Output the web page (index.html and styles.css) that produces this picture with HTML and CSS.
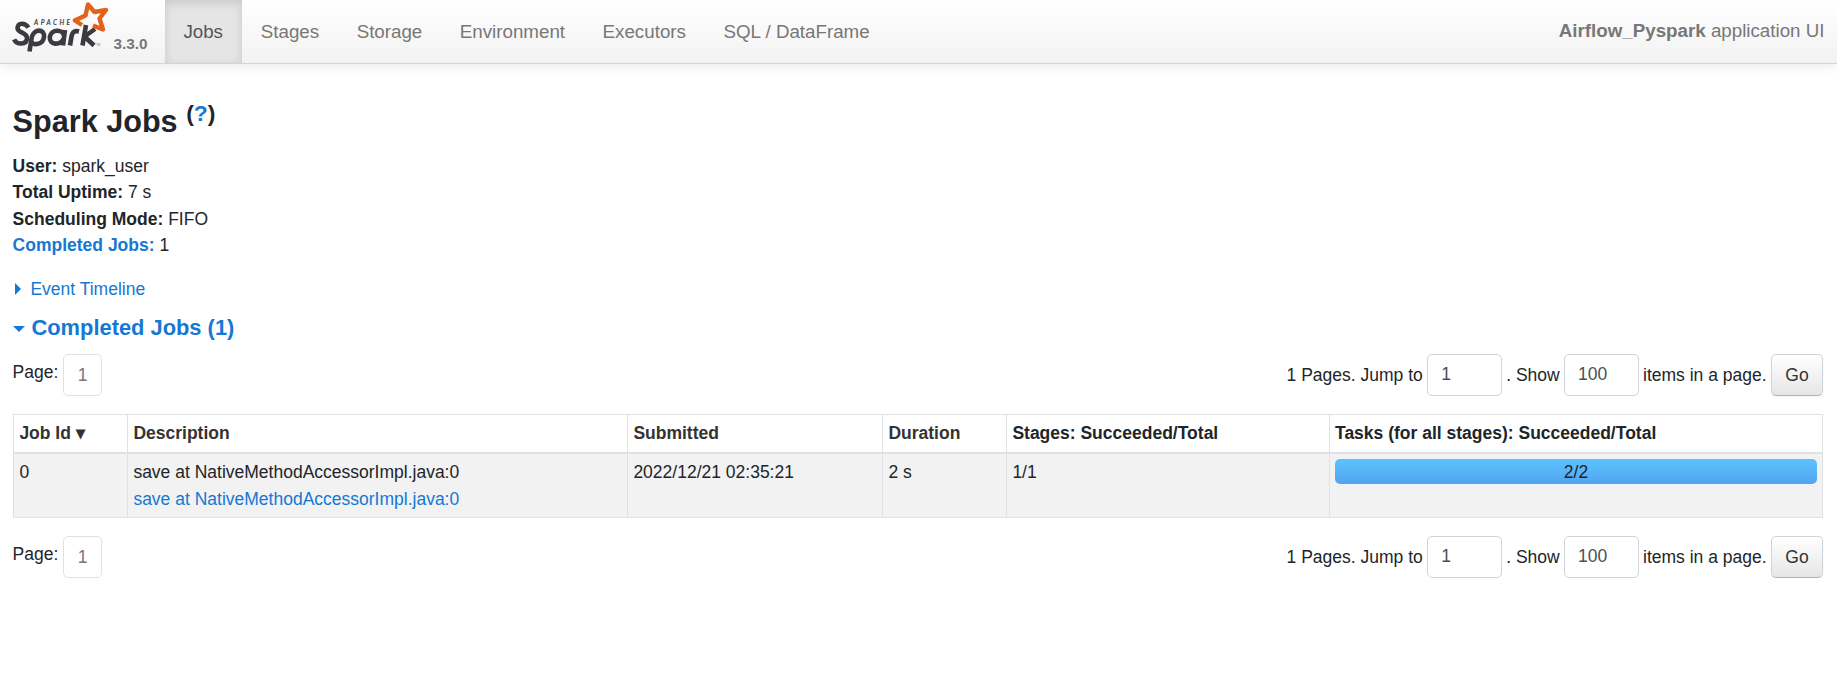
FILE: index.html
```html
<!DOCTYPE html>
<html lang="en">
<head>
<meta charset="utf-8">
<title>Airflow_Pyspark - Spark Jobs</title>
<link rel="stylesheet" href="styles.css">
</head>
<body>
<nav class="navbar">
  <a class="brand">
    <svg class="logo" viewBox="0 0 105 56" width="105" height="56" role="img" aria-label="Apache Spark">
      <g fill="none" stroke="#3c3a3e" stroke-width="4.6" stroke-linejoin="round">
        <path d="M20.500 27.500C17 22.500 9.500 22.500 9.500 28C9.500 33.500 19.500 32 19 38.500C18.500 45 9 45 6 39.500"/>
        <path d="M21.500 51.500L23.800 37C26 28.500 37 28.500 36 37C35 45 26 45.500 23.500 42"/>
        <path d="M55 45.500L57 30M56 36C55.500 29 43 28.500 41.800 37C41 45.500 52 45.500 55.500 39"/>
        <path d="M62 45.500L63.500 36.500C64.500 31.500 67 30.500 71 31.500"/>
        <path d="M74.500 45.500L78 25M87 29L76.500 36.500L86 45.500"/>
      </g>
      <path d="M74 25L66.800 20.500L77.500 15.500L80 4.500L86.500 12L98 10L91.500 18.500L95 29.500L85 25.500" fill="none" stroke="#e2621b" stroke-width="4.400" stroke-linejoin="round"/>
      <text class="logo-small" x="26" y="25" textLength="36">APACHE</text>
      <text class="logo-tm" x="88" y="45.500">TM</text>
    </svg>
    <span class="version">3.3.0</span>
  </a>
  <ul class="nav">
    <li class="active">Jobs</li><li>Stages</li><li>Storage</li><li>Environment</li><li>Executors</li><li>SQL / DataFrame</li>
  </ul>
  <span class="app-name"><strong>Airflow_Pyspark</strong> application UI</span>
</nav>
<main class="container">
  <h3>Spark Jobs <sup>(<a>?</a>)</sup></h3>
  <ul class="summary">
    <li><strong>User:</strong> spark_user</li>
    <li><strong>Total Uptime:</strong> 7 s</li>
    <li><strong>Scheduling Mode:</strong> FIFO</li>
    <li><a><strong>Completed Jobs:</strong></a> 1</li>
  </ul>
  <div class="timeline"><span class="arrow-right"></span><a>Event Timeline</a></div>
  <h4><span class="arrow-down"></span><a>Completed Jobs (1)</a></h4>
  <div class="pager">
    <div class="pages"><span class="page-label">Page:</span><span class="page-link">1</span></div>
    <form class="jump"><label>1 Pages. Jump to</label><input type="text" value="1"><label class="show">. Show</label><input type="text" value="100"><label>items in a page.</label><button type="button">Go</button></form>
  </div>
  <table>
    <colgroup><col class="c-id"><col class="c-desc"><col class="c-sub"><col class="c-dur"><col class="c-stages"><col class="c-tasks"></colgroup>
    <thead><tr><th class="sort">Job Id ▾</th><th class="sort">Description</th><th class="sort">Submitted</th><th class="sort">Duration</th><th>Stages: Succeeded/Total</th><th class="tasks-head">Tasks (for all stages): Succeeded/Total</th></tr></thead>
    <tbody><tr>
      <td>0</td>
      <td>save at NativeMethodAccessorImpl.java:0<br><a>save at NativeMethodAccessorImpl.java:0</a></td>
      <td>2022/12/21 02:35:21</td><td>2 s</td><td>1/1</td>
      <td class="tasks"><div class="progress">2/2</div></td>
    </tr></tbody>
  </table>
  <div class="pager">
    <div class="pages"><span class="page-label">Page:</span><span class="page-link">1</span></div>
    <form class="jump"><label>1 Pages. Jump to</label><input type="text" value="1"><label class="show">. Show</label><input type="text" value="100"><label>items in a page.</label><button type="button">Go</button></form>
  </div>
</main>
</body>
</html>
```
FILE: styles.css
```css
* { box-sizing: border-box; }
body {
  margin: 0;
  font: 17.5px/26.25px "Liberation Sans", Arial, sans-serif;
  color: #212529;
  background: #fff;
}
ul { list-style: none; margin: 0; padding: 0; }
a { color: #1578d2; text-decoration: none; }
.navbar {
  display: flex;
  height: 64px;
  padding: 0 12.5px 0 8px;
  background: linear-gradient(#fff, #f2f2f2);
  border-bottom: 1px solid #d4d4d4;
  box-shadow: 0 1px 12px rgba(0, 0, 0, .1);
  color: #777;
  font-size: 18.75px;
}
.brand { display: flex; width: 157px; color: #777; }
.logo { flex: none; }
.logo-small { font: italic bold 6.5px Lato, sans-serif; fill: #3c3a3e; }
.logo-tm { font: 3px "Liberation Sans", sans-serif; fill: #777; }
.version { margin-left: .6px; font-size: 15.3px; font-weight: bold; line-height: 20px; padding-top: 34px; }
.nav { display: flex; }
.nav li { padding: 18px 18.75px 0; line-height: 28px; height: 63px; }
.nav .active {
  padding-left: 18.4px;
  padding-right: 19px;
  color: #555;
  background: #e5e5e5;
  box-shadow: inset 0 3px 10px rgba(0, 0, 0, .125);
}
.app-name { margin-left: auto; padding-top: 17px; line-height: 28px; }
.container { padding: 39px 14px 0 12.6px; }
h3 { margin: 0 0 13.25px; font-size: 30.625px; line-height: 36.75px; }
sup { position: relative; top: -.5em; font-size: 75%; line-height: 0; vertical-align: baseline; }
.timeline { display: flex; align-items: center; margin-top: 18px; }
.arrow-right { margin: 0 9.4px 0 2.4px; border: 6.5px solid transparent; border-left-color: #1578d2; border-right: 0; }
.arrow-down { margin: 3px 6.5px 0 .4px; border: 6px solid transparent; border-top-color: #1578d2; border-bottom: 0; }
h4 { display: flex; align-items: center; margin: 12.25px 0 13.25px; font-size: 21.875px; line-height: 26.25px; }
.pager { display: flex; justify-content: space-between; height: 42px; }
.pages, .jump { display: flex; }
.page-label { margin-right: 4.8px; line-height: 36px; }
.page-link {
  width: 39px;
  border: 1px solid #dee2e6;
  border-radius: 5px;
  color: #777;
  line-height: 40px;
  text-align: center;
}
.jump { line-height: 42px; }
.jump input {
  width: 75px;
  height: 42px;
  margin: 0 4px 0 4.4px;
  padding: 0 13px 1px;
  border: 1px solid #ced4da;
  border-radius: 5px;
  font: inherit;
  line-height: 39px;
  color: #495057;
}
.jump button {
  width: 52px;
  height: 42px;
  margin-left: 4.4px;
  padding: 0;
  border: 1px solid #ced4da;
  border-bottom-color: #b3b3b3;
  border-radius: 5px;
  background: linear-gradient(#fff, #e6e6e6);
  box-shadow: 0 1px 2px rgba(0, 0, 0, .05);
  font: inherit;
  line-height: 38px;
  color: #333;
}
table { width: 1810px; margin: 18px 0 18px .4px; table-layout: fixed; border-collapse: collapse; }
th, td { border: 1px solid #dee2e6; padding: 5px 5px 5px 5.4px; vertical-align: top; text-align: left; }
th { padding-bottom: 6px; border-bottom-width: 2px; }
th.sort { color: #333; }
td { background: #f2f2f2; line-height: 26.5px; }
.tasks, .tasks-head { padding-left: 5px; }
.c-id { width: 114px; }
.c-desc { width: 500px; }
.c-sub { width: 255px; }
.c-dur { width: 124px; }
.c-stages { width: 323px; }
.progress {
  height: 25px;
  border-radius: 5px;
  background: linear-gradient(#5cc3ff, #52a5f0);
  line-height: 26px;
  text-align: center;
}
```
